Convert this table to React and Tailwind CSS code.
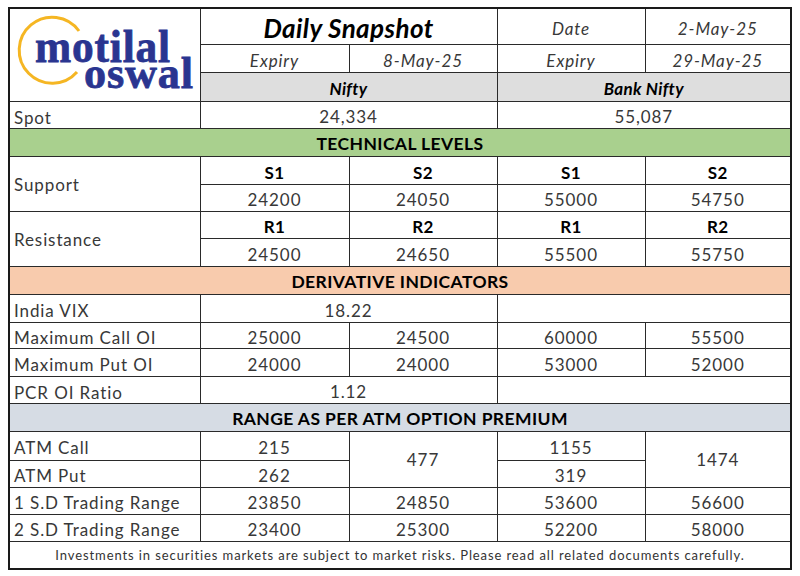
import React from 'react'

const font = { fontFamily: 'Lato, "Open Sans", sans-serif' }

function Logo() {
  return (
    <svg width="190" height="92" viewBox="0 0 190 92" className="block">
      <path d="M 69 22 A 33 33 0 1 0 67 63" fill="none" stroke="#f5b623" strokeWidth="3" />
      <text x="25" y="53" fontFamily='"Liberation Serif", serif' fontWeight="700" fontSize="47" fill="#2a3590" stroke="#2a3590" strokeWidth="0.8" textLength="136" lengthAdjust="spacingAndGlyphs">motilal</text>
      <text x="74" y="79" fontFamily='"Liberation Serif", serif' fontWeight="700" fontSize="45" fill="#2a3590" stroke="#2a3590" strokeWidth="0.8" textLength="110" lengthAdjust="spacingAndGlyphs">oswal</text>
    </svg>
  )
}

const cell = "border border-[#2a2a2a] text-center p-0 leading-none"
const lbl = "border border-[#2a2a2a] text-left pl-[4px] p-0 leading-none"

function Section({ bg, children }) {
  return (
    <tr className="h-[28px]">
      <td colSpan={5} className={`${cell} ${bg} font-bold text-black text-[17.5px] tracking-[0.4px] pt-[3px]`}>{children}</td>
    </tr>
  )
}

export default function App() {
  return (
    <div className="w-[800px] h-[576px] bg-white pl-[8px] pt-[7px]" style={font}>
      <table className="table-fixed border-collapse border-2 border-[#1a1a1a] w-[782px] text-[17px] tracking-[0.9px] text-[#383838]">
        <colgroup>
          <col className="w-[191px]" />
          <col className="w-[149px]" />
          <col className="w-[148px]" />
          <col className="w-[148px]" />
          <col className="w-[146px]" />
        </colgroup>
        <tbody>
          <tr className="h-[36px]">
            <td rowSpan={3} className={`${cell} align-top`}><Logo /></td>
            <td colSpan={2} className={`${cell} text-[26px] tracking-[0.4px] font-bold italic text-black pt-[2px]`}>Daily Snapshot</td>
            <td className={`${cell} italic pt-[3px]`}>Date</td>
            <td className={`${cell} italic pt-[3px]`}>2-May-25</td>
          </tr>
          <tr className="h-[27px]">
            <td className={`${cell} italic pt-[3px]`}>Expiry</td>
            <td className={`${cell} italic pt-[3px]`}>8-May-25</td>
            <td className={`${cell} italic pt-[3px]`}>Expiry</td>
            <td className={`${cell} italic pt-[3px]`}>29-May-25</td>
          </tr>
          <tr className="h-[28px] bg-[#dedede]">
            <td colSpan={2} className={`${cell} font-bold italic text-black tracking-[0.3px] pt-[3px]`}>Nifty</td>
            <td colSpan={2} className={`${cell} font-bold italic text-black tracking-[0.3px] pt-[3px]`}>Bank Nifty</td>
          </tr>
          <tr className="h-[27px]">
            <td className={`${lbl} pt-[5px]`}>Spot</td>
            <td colSpan={2} className={`${cell} pt-[3px]`}>24,334</td>
            <td colSpan={2} className={`${cell} pt-[3px]`}>55,087</td>
          </tr>
          <Section bg="bg-[#a9d08e]">TECHNICAL LEVELS</Section>
          <tr className="h-[28px]">
            <td rowSpan={2} className={lbl}>Support</td>
            {['S1', 'S2', 'S1', 'S2'].map((t, i) => (
              <td key={i} className={`${cell} font-bold text-black tracking-[0.3px] pt-[3px]`}>{t}</td>
            ))}
          </tr>
          <tr className="h-[27px]">
            {['24200', '24050', '55000', '54750'].map((t, i) => (
              <td key={i} className={`${cell} pt-[3px]`}>{t}</td>
            ))}
          </tr>
          <tr className="h-[27px]">
            <td rowSpan={2} className={lbl}>Resistance</td>
            {['R1', 'R2', 'R1', 'R2'].map((t, i) => (
              <td key={i} className={`${cell} font-bold text-black tracking-[0.3px] pt-[3px]`}>{t}</td>
            ))}
          </tr>
          <tr className="h-[28px]">
            {['24500', '24650', '55500', '55750'].map((t, i) => (
              <td key={i} className={`${cell} pt-[3px]`}>{t}</td>
            ))}
          </tr>
          <Section bg="bg-[#f8cbad]">DERIVATIVE INDICATORS</Section>
          <tr className="h-[28px]">
            <td className={`${lbl} pt-[3px]`}>India VIX</td>
            <td colSpan={2} className={`${cell} pt-[3px]`}>18.22</td>
            <td colSpan={2} className={cell}></td>
          </tr>
          <tr className="h-[26px]">
            <td className={`${lbl} pt-[3px]`}>Maximum Call OI</td>
            {['25000', '24500', '60000', '55500'].map((t, i) => (
              <td key={i} className={`${cell} pt-[3px]`}>{t}</td>
            ))}
          </tr>
          <tr className="h-[28px]">
            <td className={`${lbl} pt-[3px]`}>Maximum Put OI</td>
            {['24000', '24000', '53000', '52000'].map((t, i) => (
              <td key={i} className={`${cell} pt-[3px]`}>{t}</td>
            ))}
          </tr>
          <tr className="h-[27px]">
            <td className={`${lbl} pt-[5px]`}>PCR OI Ratio</td>
            <td colSpan={2} className={`${cell} pt-[3px]`}>1.12</td>
            <td colSpan={2} className={cell}></td>
          </tr>
          <Section bg="bg-[#d6dce4]">RANGE AS PER ATM OPTION PREMIUM</Section>
          <tr className="h-[29px]">
            <td className={`${lbl} pt-[3px]`}>ATM Call</td>
            <td className={`${cell} pt-[3px]`}>215</td>
            <td rowSpan={2} className={cell}>477</td>
            <td className={`${cell} pt-[3px]`}>1155</td>
            <td rowSpan={2} className={cell}>1474</td>
          </tr>
          <tr className="h-[27px]">
            <td className={`${lbl} pt-[3px]`}>ATM Put</td>
            <td className={`${cell} pt-[3px]`}>262</td>
            <td className={`${cell} pt-[3px]`}>319</td>
          </tr>
          <tr className="h-[27px]">
            <td className={`${lbl} pt-[3px]`}>1 S.D Trading Range</td>
            {['23850', '24850', '53600', '56600'].map((t, i) => (
              <td key={i} className={`${cell} pt-[3px]`}>{t}</td>
            ))}
          </tr>
          <tr className="h-[27px]">
            <td className={`${lbl} pt-[3px]`}>2 S.D Trading Range</td>
            {['23400', '25300', '52200', '58000'].map((t, i) => (
              <td key={i} className={`${cell} pt-[3px]`}>{t}</td>
            ))}
          </tr>
          <tr className="h-[27px]">
            <td colSpan={5} className={`${cell} text-[13px] tracking-[0.9px] text-[#333] pt-[2px]`}>
              Investments in securities markets are subject to market risks. Please read all related documents carefully.
            </td>
          </tr>
        </tbody>
      </table>
    </div>
  )
}
